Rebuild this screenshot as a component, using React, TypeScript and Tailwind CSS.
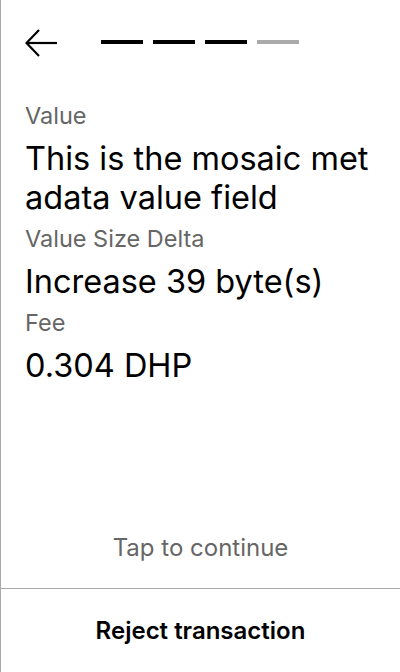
const steps = [true, true, true, false];

const fields = [
    { label: "Value", value: "This is the mosaic metadata value field" },
    { label: "Value Size Delta", value: "Increase 39 byte(s)" },
    { label: "Fee", value: "0.304 DHP" },
];

const App: React.FC = () => {
    return (
        <div className="h-[672px] w-[400px] bg-white flex flex-col border-l border-[#aaaaaa] text-black" style={{ fontFamily: "Inter, 'Noto Sans', sans-serif" }}>
            {/* header */}
            <div className="h-[86px] flex items-center pl-6">
                <svg width="32" height="28" viewBox="0 0 32 28" fill="none" stroke="black" strokeWidth="2.2">
                    <path d="M32 14 H1.5" />
                    <path d="M14 1 L1.5 14 L14 27" />
                </svg>
                <div className="flex gap-[10px] ml-[44px] -mt-[2px]">
                    {steps.map((done, i) => (
                        <div key={i} className={`h-1 w-[42px] ${done ? 'bg-black' : 'bg-[#aaaaaa]'}`}></div>
                    ))}
                </div>
            </div>

            {/* content */}
            <div className="flex-1 flex flex-col gap-[6.5px] px-6 pt-[14px]">
                {fields.map((f, index) => (
                    <div key={index} className="flex flex-col gap-[6.5px]">
                        <p className="text-[23.5px] leading-[32px] text-[#666666]">{f.label}</p>
                        <p className="text-[32.5px] leading-[39px] break-all">{f.value}</p>
                    </div>
                ))}
            </div>

            <div className="h-[80px] flex items-center justify-center text-[24px] text-[#666666]">
                Tap to continue
            </div>

            <div className="h-[84px] border-t border-[#aaaaaa] flex items-center justify-center">
                <span className="text-[24px] font-semibold">Reject transaction</span>
            </div>
        </div>
    );
};

export default App;
